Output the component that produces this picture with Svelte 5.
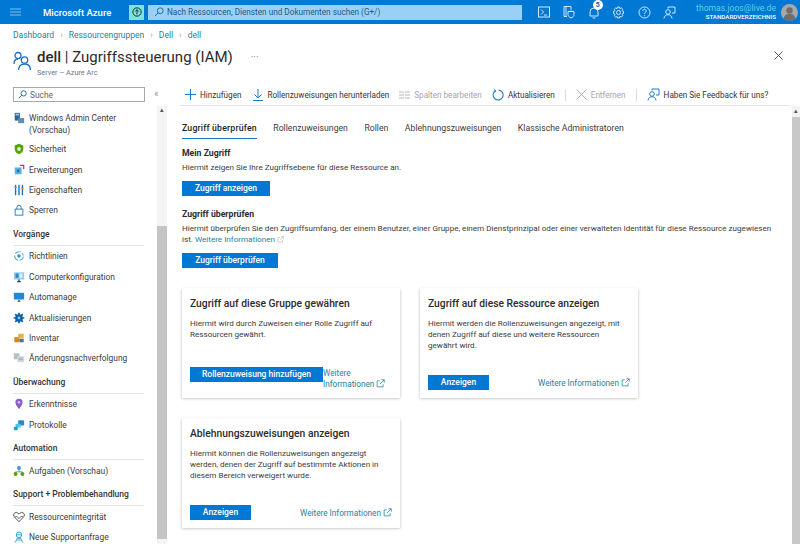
<script>
  // sidebar data, icon = inner svg markup on a 14x14 box
  const icons = {
    wac: '<rect x="2" y="1" width="6" height="9" fill="#2f6496"/><rect x="3" y="2" width="4" height="2" fill="#9ccbe8"/><rect x="6" y="7" width="7" height="6" fill="#6f8ba3"/><rect x="7" y="8" width="5" height="3" fill="#3d9ad6"/>',
    shield: '<path d="M7 1l5 2v4c0 3-2 5-5 6-3-1-5-3-5-6V3z" fill="#57a300"/><circle cx="7" cy="7" r="2.2" fill="#dff0c8"/>',
    ext: '<rect x="2" y="4" width="8" height="8" fill="#59b4d9"/><rect x="4.500" y="6.500" width="3" height="3" fill="#1f78b8"/><path d="M8 1.500h4.500V6" fill="none" stroke="#a33a9e" stroke-width="1.400"/>',
    props: '<path d="M3 1v12M7 1v12M11 1v12" stroke="#0078d4" stroke-width="1.600"/><path d="M1.800 4h2.400M5.800 9h2.400M9.800 5h2.400" stroke="#e07a1f" stroke-width="1.600"/>',
    lock: '<rect x="2.500" y="6" width="9" height="7" fill="none" stroke="#2b7cb8" stroke-width="1.100"/><path d="M4.500 6V4a2.500 2.500 0 015 0v2" fill="none" stroke="#2b7cb8" stroke-width="1.100"/>',
    policy: '<circle cx="7" cy="7" r="5" fill="none" stroke="#59b4d9" stroke-width="1.300" stroke-dasharray="7 2"/><circle cx="7" cy="7" r="1.900" fill="#2b88c8"/><path d="M9 7h4" stroke="#fff" stroke-width="1"/>',
    config: '<rect x="1" y="1.500" width="12" height="8.500" fill="#8ed0ee"/><rect x="3" y="3" width="3.500" height="5" fill="#2b88c8"/><rect x="7.500" y="3" width="3.500" height="5" fill="#d8f0fa"/><path d="M5 12.500h4M7 10v2.500" stroke="#2d3b46" stroke-width="1.500"/>',
    auto: '<rect x="1" y="2" width="12" height="8" rx="1" fill="#1f8ad8"/><path d="M5 12.500h4L7 10z" fill="#0a5a99"/>',
    update: '<circle cx="7" cy="7" r="4.400" fill="#0b5fa5"/><path d="M7 .8v12.400M.8 7h12.400M2.600 2.600l8.800 8.800M11.400 2.600l-8.800 8.800" stroke="#0b5fa5" stroke-width="2"/><circle cx="7" cy="7" r="1.700" fill="#7cc4e8"/>',
    inv: '<rect x="1.500" y="6" width="6" height="6" fill="#d98a1f"/><rect x="6" y="2" width="6.500" height="5.500" fill="#e8b04a"/><rect x="7.500" y="8" width="5" height="4" fill="#5a6f85"/>',
    track: '<rect x="1" y="1.500" width="6.500" height="7" fill="#b4bec6"/><rect x="5" y="5" width="8" height="7" fill="#d4dbe0"/><path d="M6.500 7h5M6.500 9h5" stroke="#8a98a4" stroke-width=".9"/>',
    insight: '<path d="M7 13.200C5 10 2.800 7.800 2.800 5a4.200 4.200 0 018.400 0c0 2.800-2.200 5-4.200 8.200z" fill="#8a5ccc"/><circle cx="7" cy="5" r="1.600" fill="#d8c4f0"/>',
    logs: '<rect x="6" y="1.500" width="7" height="6" rx="1.500" fill="#2b88c8"/><rect x="3" y="5.500" width="6" height="4.500" rx="1" fill="#49c5e8"/><rect x="1" y="9" width="4.500" height="4" rx="1" fill="#1f9fd0"/>',
    tasks: '<circle cx="7" cy="3.400" r="2.300" fill="#3d9ad6"/><circle cx="3" cy="10.600" r="2.300" fill="#57a300"/><circle cx="11" cy="10.600" r="2.300" fill="#57a300"/><path d="M7 5.500v2.500M3 10V8h8v2" fill="none" stroke="#6a7a86" stroke-width=".9"/>',
    health: '<path d="M7 12.500L1.600 6.800a3 3 0 014.300-4.200L7 3.700l1.100-1.100a3 3 0 014.300 4.200z" fill="none" stroke="#3d3d3d" stroke-width="1"/><path d="M2.500 6.500h2.500L7 9l2-2.500h2.500" fill="none" stroke="#3d3d3d" stroke-width=".8"/>',
    support: '<circle cx="7" cy="4.500" r="3.200" fill="none" stroke="#2b9fc8" stroke-width="1.100"/><path d="M3.800 4.500h6.400M2.500 13.500L5 8.500h4l2.500 5M5 10.500h4" fill="none" stroke="#2b9fc8" stroke-width="1.100"/>'
  };

  const nav = [
    { items: [
      { icon: 'wac', label: 'Windows Admin Center (Vorschau)' },
      { icon: 'shield', label: 'Sicherheit' },
      { icon: 'ext', label: 'Erweiterungen' },
      { icon: 'props', label: 'Eigenschaften' },
      { icon: 'lock', label: 'Sperren' }
    ] },
    { title: 'Vorgänge', items: [
      { icon: 'policy', label: 'Richtlinien' },
      { icon: 'config', label: 'Computerkonfiguration' },
      { icon: 'auto', label: 'Automanage' },
      { icon: 'update', label: 'Aktualisierungen' },
      { icon: 'inv', label: 'Inventar' },
      { icon: 'track', label: 'Änderungsnachverfolgung' }
    ] },
    { title: 'Überwachung', items: [
      { icon: 'insight', label: 'Erkenntnisse' },
      { icon: 'logs', label: 'Protokolle' }
    ] },
    { title: 'Automation', items: [
      { icon: 'tasks', label: 'Aufgaben (Vorschau)' }
    ] },
    { title: 'Support + Problembehandlung', items: [
      { icon: 'health', label: 'Ressourcenintegrität' },
      { icon: 'support', label: 'Neue Supportanfrage' }
    ] }
  ];

  const tabs = ['Zugriff überprüfen', 'Rollenzuweisungen', 'Rollen', 'Ablehnungszuweisungen', 'Klassische Administratoren'];
</script>

{#snippet extlink(size)}
  <svg class="ext" width={size} height={size} viewBox="0 0 12 12" fill="none" stroke="currentColor" stroke-width="1">
    <path d="M9.500 7v3.500h-8v-8H5M7 1h4v4M11 1L5.500 6.500" />
  </svg>
{/snippet}

<div class="page">
  <header class="topbar">
    <svg class="burger" width="11" height="8" viewBox="0 0 11 8"><path d="M0 1h11M0 4h11M0 7h11" stroke="#7cc4f0" stroke-width="1" /></svg>
    <span class="brand">Microsoft Azure</span>
    <span class="upgrade">
      <svg width="10" height="10" viewBox="0 0 12 12" fill="none" stroke="#0c3b3a" stroke-width="1.200"><circle cx="6" cy="6" r="5" /><path d="M6 9V3.400M3.800 5.400L6 3.200l2.200 2.200" /></svg>
    </span>
    <div class="globalsearch">
      <svg width="10" height="10" viewBox="0 0 12 12" fill="none" stroke="#1f6fa8" stroke-width="1.200"><circle cx="7.500" cy="4.500" r="3.500" /><path d="M5 7l-4 4" /></svg>
      <span>Nach Ressourcen, Diensten und Dokumenten suchen (G+/)</span>
    </div>
    <div class="topicons">
      <svg width="12" height="12" viewBox="0 0 12 12" fill="none" stroke="#cfe8fa" stroke-width="1"><rect x=".5" y="1" width="11" height="10" /><path d="M3 3.500L5.500 6 3 8.500M6 9h3" /></svg>
      <svg width="13" height="14" viewBox="0 0 13 14" fill="none" stroke="#cfe8fa" stroke-width="1"><path d="M2 1.500h7v4M2 1.500v10h3M4 1.500v10" /><path d="M6 6.500h6v3c0 1.500-1.500 3-3 3.500-1.500-.5-3-2-3-3.500z" /></svg>
      <span class="bell">
        <svg width="12" height="13" viewBox="0 0 12 13" fill="none" stroke="#cfe8fa" stroke-width="1"><path d="M2 10V6a4 4 0 018 0v4zM4.500 12h3" /></svg>
        <span class="badge">5</span>
      </span>
      <svg width="13" height="13" viewBox="0 0 13 13" fill="none" stroke="#cfe8fa" stroke-width="1"><circle cx="6.500" cy="6.500" r="2" /><path d="M5.500 1h2l.4 1.600 1.500-.6 1.400 1.400-.8 1.400 1.500.7v2l-1.500.6.800 1.500-1.400 1.400-1.500-.7L7.500 12h-2l-.4-1.500-1.500.7-1.400-1.400.8-1.500L1.500 7.500v-2L3 4.800l-.8-1.400L3.600 2l1.500.6z" /></svg>
      <svg width="13" height="13" viewBox="0 0 13 13" fill="none" stroke="#cfe8fa" stroke-width="1"><circle cx="6.500" cy="6.500" r="5.500" /><path d="M4.800 5a1.700 1.700 0 113 1c-.7.5-1.300.9-1.300 1.800M6.500 9.200v1" /></svg>
      <svg width="13" height="13" viewBox="0 0 13 13" fill="none" stroke="#cfe8fa" stroke-width="1"><circle cx="5" cy="6" r="2.300" /><path d="M1 12.500c.3-2.500 1.800-3.800 4-3.800s3.700 1.300 4 3.800M5 2.500V1h7v6h-3" /></svg>
    </div>
    <div class="account">
      <span class="mail">thomas.joos@live.de</span>
      <span class="tenant">STANDARDVERZEICHNIS</span>
    </div>
    <span class="avatar">
      <svg width="17" height="17" viewBox="0 0 20 20"><circle cx="10" cy="10" r="10" fill="#a8a8a8" /><circle cx="10" cy="7.500" r="3.800" fill="#6e6e6e" /><path d="M3 17c1-4 3.500-5.500 7-5.500s6 1.500 7 5.500a10 10 0 01-14 0z" fill="#6e6e6e" /></svg>
    </span>
  </header>

  <nav class="crumbs">
    <span>Dashboard</span><i>›</i><span>Ressourcengruppen</span><i>›</i><span>Dell</span><i>›</i><span>dell</span>
  </nav>

  <div class="titlerow">
    <svg width="18" height="20" viewBox="0 0 18 20" fill="none" stroke="#1b6ec2" stroke-width="1.300">
      <circle cx="5" cy="4.500" r="3" /><path d="M1 13c0-3 1.500-5 4-5" /><circle cx="11.500" cy="9" r="3.200" /><path d="M5.500 19c.3-3.800 2.600-6 6-6s5.700 2.200 6 6" />
    </svg>
    <div class="titletext">
      <h1><b>dell</b> | Zugriffssteuerung (IAM)</h1>
      <p>Server – Azure Arc</p>
    </div>
    <span class="more">···</span>
    <svg class="close" width="9" height="9" viewBox="0 0 9 9"><path d="M.5.500l8 8M8.500.500l-8 8" stroke="#444" stroke-width=".9" /></svg>
  </div>

  <div class="body">
    <aside class="side">
      <div class="sidetop">
        <div class="sidesearch">
          <svg width="9" height="9" viewBox="0 0 12 12" fill="none" stroke="#1f6fa8" stroke-width="1.300"><circle cx="7.500" cy="4.500" r="3.500" /><path d="M5 7l-4 4" /></svg>
          <span>Suche</span>
        </div>
        <span class="collapse">«</span>
      </div>
      <div class="sidemain">
        <div class="navlist">
          {#each nav as group}
            {#if group.title}
              <h2>{group.title}</h2>
            {/if}
            {#each group.items as item}
              <div class="navitem">
                <svg width="12" height="12" viewBox="0 0 14 14">{@html icons[item.icon]}</svg>
                <span>{item.label}</span>
              </div>
            {/each}
          {/each}
        </div>
        <div class="sidebar-scroll">
          <span class="arrow">▴</span>
          <div class="thumb"></div>
        </div>
      </div>
    </aside>

    <main class="main">
      <div class="commands">
        <span class="cmd">
          <svg width="11" height="11" viewBox="0 0 11 11"><path d="M5.500 0v11M0 5.500h11" stroke="#1b7fc8" stroke-width="1" /></svg>
          Hinzufügen
        </span>
        <span class="cmd second">
          <svg width="10" height="12" viewBox="0 0 10 12" fill="none" stroke="#1b7fc8" stroke-width="1"><path d="M5 0v8.500M1.500 5.500L5 9l3.500-3.500M0 11.500h10" /></svg>
          Rollenzuweisungen herunterladen
        </span>
        <span class="cmd off">
          <svg width="11" height="8" viewBox="0 0 11 8"><path d="M0 1h5M0 4h5M0 7h5M6 1h5M6 4h5M6 7h5" stroke="#b5b5b5" stroke-width="1" /></svg>
          Spalten bearbeiten
        </span>
        <span class="cmd">
          <svg width="12" height="12" viewBox="0 0 12 12" fill="none" stroke="#1b7fc8" stroke-width="1.100"><path d="M3.500 1.700A5 5 0 106.500 1" /><path d="M2.500 .5l1 1.500-1.500 1" /></svg>
          Aktualisieren
        </span>
        <span class="sep"></span>
        <span class="cmd off">
          <svg width="11" height="11" viewBox="0 0 11 11"><path d="M.5.500l10 10M10.500.500l-10 10" stroke="#a8a8a8" stroke-width=".9" /></svg>
          Entfernen
        </span>
        <span class="sep"></span>
        <span class="cmd">
          <svg width="13" height="13" viewBox="0 0 13 13" fill="none" stroke="#1b7fc8" stroke-width="1"><circle cx="5" cy="6" r="2.300" /><path d="M1 12.500c.3-2.500 1.800-3.800 4-3.800s3.700 1.300 4 3.800M5 2.500V1h7v6h-3" /></svg>
          Haben Sie Feedback für uns?
        </span>
      </div>

      <div class="content">
        <div class="pane">
          <div class="tabs">
            {#each tabs as tab, i}
              <span class="tab" class:active={i === 0}>{tab}</span>
            {/each}
          </div>

          <section>
            <h3>Mein Zugriff</h3>
            <p>Hiermit zeigen Sie Ihre Zugriffsebene für diese Ressource an.</p>
            <button class="w88">Zugriff anzeigen</button>
          </section>

          <section>
            <h3>Zugriff überprüfen</h3>
            <p>Hiermit überprüfen Sie den Zugriffsumfang, der einem Benutzer, einer Gruppe, einem Dienstprinzipal oder einer verwalteten Identität für diese Ressource zugewiesen ist. <a href="#top" class="faint">Weitere Informationen {@render extlink(7)}</a></p>
            <button class="w96">Zugriff überprüfen</button>
          </section>

          <div class="cards">
            <article class="card">
              <h4>Zugriff auf diese Gruppe gewähren</h4>
              <p>Hiermit wird durch Zuweisen einer Rolle Zugriff auf Ressourcen gewährt.</p>
              <div class="cardfoot tight">
                <button class="w133">Rollenzuweisung hinzufügen</button>
                <a href="#top">Weitere<br />Informationen {@render extlink(9)}</a>
              </div>
            </article>
            <article class="card">
              <h4>Zugriff auf diese Ressource anzeigen</h4>
              <p>Hiermit werden die Rollenzuweisungen angezeigt, mit denen Zugriff auf diese und weitere Ressourcen gewährt wird.</p>
              <div class="cardfoot">
                <button class="w61">Anzeigen</button>
                <a href="#top">Weitere Informationen {@render extlink(9)}</a>
              </div>
            </article>
            <article class="card">
              <h4>Ablehnungszuweisungen anzeigen</h4>
              <p>Hiermit können die Rollenzuweisungen angezeigt werden, denen der Zugriff auf bestimmte Aktionen in diesem Bereich verweigert wurde.</p>
              <div class="cardfoot">
                <button class="w61">Anzeigen</button>
                <a href="#top">Weitere Informationen {@render extlink(9)}</a>
              </div>
            </article>
          </div>
        </div>
        <div class="pagescroll">
          <span class="arrow">▴</span>
          <div class="pagethumb"></div>
        </div>
      </div>
    </main>
  </div>
</div>

<style>
  :global(body) {
    margin: 0;
    background: #fff;
  }

  .page {
    width: 800px;
    height: 544px;
    overflow: hidden;
    display: flex;
    flex-direction: column;
    font-family: Roboto, "Noto Sans", sans-serif;
    font-size: 8.1px;
    color: #3b3b3b;
  }

  /* top bar */
  .topbar {
    flex: none;
    height: 24px;
    background: #0078d4;
    display: flex;
    align-items: center;
    color: #fff;
  }
  .burger {
    margin-left: 10px;
  }
  .brand {
    margin-left: 22px;
    width: 86px;
    font-size: 9.500px;
    font-weight: 500;
    white-space: nowrap;
  }
  .upgrade {
    width: 15px;
    height: 15px;
    background: #7fe3dc;
    display: flex;
    align-items: center;
    justify-content: center;
  }
  .globalsearch {
    margin-left: 4px;
    width: 374px;
    height: 15px;
    background: #9bd0f5;
    display: flex;
    align-items: center;
    gap: 3px;
    padding-left: 6px;
    box-sizing: border-box;
    color: #1d5a85;
    font-size: 8.200px;
  }
  .topicons {
    margin-left: 16px;
    width: 138px;
    display: flex;
    justify-content: space-between;
    align-items: center;
  }
  .bell {
    position: relative;
    display: flex;
  }
  .badge {
    position: absolute;
    left: 5px;
    top: -6px;
    width: 10px;
    height: 10px;
    border-radius: 50%;
    background: #fff;
    color: #0b5a9a;
    font-size: 7px;
    font-weight: 700;
    line-height: 10px;
    text-align: center;
  }
  .account {
    margin-left: auto;
    padding-top: 2px;
    display: flex;
    flex-direction: column;
    align-items: flex-end;
    line-height: 9px;
  }
  .mail {
    font-size: 8.600px;
    color: #5fd0e8;
  }
  .tenant {
    font-size: 6.200px;
    font-weight: 500;
  }
  .avatar {
    margin: 0 2px 0 5px;
    display: flex;
  }

  /* breadcrumb and title */
  .crumbs {
    flex: none;
    height: 22px;
    padding-left: 13px;
    display: flex;
    align-items: center;
    color: #23829f;
    font-size: 8.500px;
  }
  .crumbs i {
    font-style: normal;
    color: #999;
    margin: 0 6px;
  }
  .titlerow {
    flex: none;
    height: 36px;
    display: flex;
    padding-left: 13px;
    padding-right: 17px;
  }
  .titlerow > svg {
    margin-top: 5px;
  }
  .titletext {
    margin-left: 6px;
    padding-top: 1px;
  }
  h1 {
    margin: 0;
    font-size: 15px;
    font-weight: 400;
    line-height: 21px;
    color: #2b2b2b;
    white-space: nowrap;
  }
  h1 b {
    font-weight: 500;
  }
  .titletext p {
    margin: 0;
    font-size: 7.300px;
    line-height: 9px;
    color: #777;
  }
  .more {
    margin-left: 18px;
    margin-top: 6px;
    color: #888;
    font-size: 10px;
  }
  .close {
    margin-left: auto;
    margin-top: 9px;
  }

  .body {
    flex: 1;
    min-height: 0;
    display: flex;
  }

  /* sidebar */
  .side {
    flex: none;
    width: 167px;
    display: flex;
    flex-direction: column;
  }
  .sidetop {
    flex: none;
    height: 24px;
    display: flex;
    align-items: flex-start;
    padding: 5px 0 0 13px;
    box-sizing: border-box;
  }
  .sidesearch {
    width: 132px;
    height: 15px;
    box-sizing: border-box;
    border: 1px solid #a8a8a8;
    display: flex;
    align-items: center;
    gap: 3px;
    padding-left: 4px;
    color: #666;
    font-size: 8.400px;
  }
  .collapse {
    margin-left: 9px;
    color: #999;
    font-size: 10px;
    line-height: 14px;
  }
  .sidemain {
    flex: 1;
    min-height: 0;
    display: flex;
  }
  .navlist {
    width: 157px;
    padding: 3px 13px 0 13px;
    box-sizing: border-box;
    font-size: 8.400px;
  }
  .navitem {
    display: flex;
    align-items: center;
    gap: 4px;
    min-height: 20.400px;
    line-height: 12px;
  }
  .navitem svg {
    flex: none;
  }
  .navitem span {
    white-space: nowrap;
  }
  .navitem:first-child {
    min-height: 30px;
    align-items: flex-start;
    padding-top: 3px;
    box-sizing: border-box;
  }
  .navitem:first-child span {
    white-space: normal;
    width: 110px;
  }
  h2 {
    margin: 3.600px 0 0;
    height: 22px;
    box-sizing: border-box;
    border-bottom: 1px solid #e4e4e4;
    font-size: 8.500px;
    font-weight: 500;
    line-height: 20px;
    color: #333;
    white-space: nowrap;
  }
  .sidebar-scroll {
    width: 10px;
    background: #f4f4f4;
    display: flex;
    flex-direction: column;
    align-items: center;
  }
  .arrow {
    font-size: 7px;
    line-height: 8px;
    color: #555;
  }
  .thumb {
    margin-top: 112px;
    width: 100%;
    height: 313px;
    background: #c4c4c4;
  }

  /* main */
  .main {
    flex: 1;
    min-width: 0;
    display: flex;
    flex-direction: column;
  }
  .commands {
    flex: none;
    height: 24px;
    margin: 0 10px 0 13px;
    padding: 2px 0 0 5px;
    box-sizing: border-box;
    border-bottom: 1px solid #e6e6e6;
    display: flex;
    align-items: center;
    gap: 10px;
    white-space: nowrap;
    color: #333;
    font-size: 8.150px;
  }
  .cmd {
    display: flex;
    align-items: center;
    gap: 4px;
  }
  .second {
    margin-left: 2px;
  }
  .off {
    color: #a6a6a6;
  }
  .sep {
    width: 1px;
    height: 12px;
    background: #ddd;
  }
  .content {
    flex: 1;
    min-height: 0;
    display: flex;
  }
  .pane {
    flex: 1;
    min-width: 0;
    padding: 0 12px 0 15px;
  }
  .pagescroll {
    flex: none;
    width: 8px;
    background: #f2f2f2;
    display: flex;
    flex-direction: column;
    align-items: center;
  }
  .pagescroll .arrow {
    height: 11px;
    line-height: 11px;
  }
  .pagethumb {
    flex: 1;
    width: 100%;
    background: #c8c8c8;
  }

  .tabs {
    display: flex;
    gap: 16.500px;
    height: 35px;
    padding-top: 12px;
    box-sizing: border-box;
    font-size: 8.700px;
  }
  .tab {
    line-height: 20px;
    white-space: nowrap;
    box-sizing: border-box;
  }
  .tab.active {
    font-weight: 500;
    letter-spacing: 0.2px;
    color: #222;
    border-bottom: 1.500px solid #1b7fc8;
    height: 21px;
  }

  section {
    margin-bottom: 6px;
  }
  section h3 {
    margin: 0;
    font-size: 8.700px;
    font-weight: 700;
    color: #2b2b2b;
    line-height: 14px;
    padding-top: 5px;
  }
  section p {
    margin: 0 0 8px;
    line-height: 11px;
    padding-top: 2px;
  }
  a {
    color: #23829f;
    text-decoration: none;
  }
  .faint .ext {
    color: #b0b0b0;
  }
  .ext {
    vertical-align: -1px;
  }

  button {
    display: block;
    height: 15px;
    padding: 0;
    border: 0;
    background: #0078d4;
    color: #fff;
    font: inherit;
    font-size: 8.500px;
    font-weight: 500;
    text-align: center;
    line-height: 15px;
  }
  .w88 { width: 88px; }
  .w96 { width: 96px; }
  .w133 { width: 133px; }
  .w61 { width: 61px; }

  /* cards */
  .cards {
    display: grid;
    grid-template-columns: 218px 218px;
    grid-auto-rows: 110px;
    gap: 20px 20px;
    margin-top: 20px;
  }
  .card {
    background: #fff;
    box-shadow: 0 0.500px 3px rgba(0, 0, 0, 0.28);
    padding: 9px 8px 8px;
    box-sizing: border-box;
    display: flex;
    flex-direction: column;
  }
  .card h4 {
    margin: 0;
    font-size: 10.300px;
    font-weight: 500;
    color: #2b2b2b;
    line-height: 13px;
    white-space: nowrap;
  }
  .card p {
    margin: 8px 0 0;
    line-height: 10.800px;
  }
  .cardfoot {
    margin-top: auto;
    display: flex;
    align-items: center;
    justify-content: space-between;
    font-size: 8.200px;
  }
  .cardfoot.tight {
    justify-content: flex-start;
    align-items: flex-start;
    line-height: 11px;
  }
  .cardfoot a {
    white-space: nowrap;
  }
  .cardfoot.tight a {
    padding-top: 1px;
  }
</style>
